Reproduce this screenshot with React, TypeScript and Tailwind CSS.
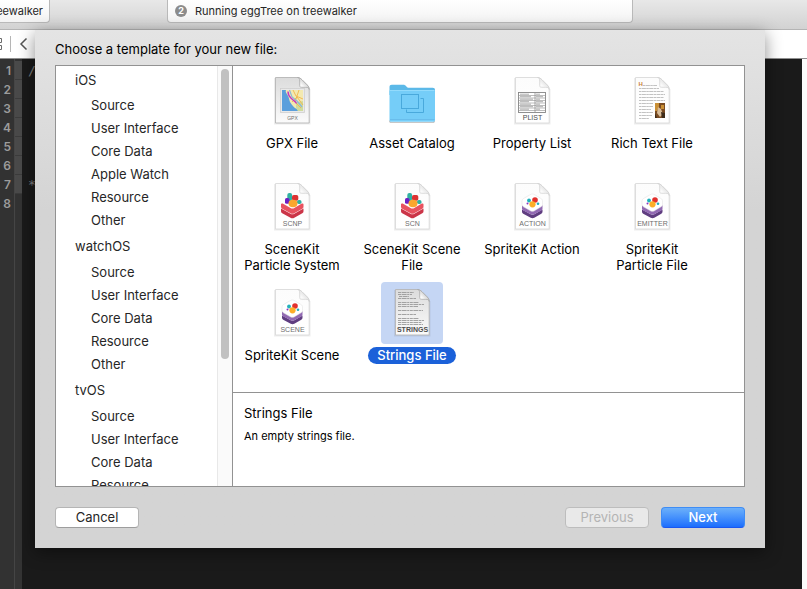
import { useId, useState } from "react";
import type { ReactNode } from "react";

type Template = { name: string; lines: string[]; icon: ReactNode; info?: string };

const sections = [
  { title: "iOS", items: ["Source", "User Interface", "Core Data", "Apple Watch", "Resource", "Other"] },
  { title: "watchOS", items: ["Source", "User Interface", "Core Data", "Resource", "Other"] },
  { title: "tvOS", items: ["Source", "User Interface", "Core Data", "Resource"] },
];

function Page({ label, bold, dark, children }: { label?: string; bold?: boolean; dark?: boolean; children?: ReactNode }) {
  const id = useId();
  return (
    <svg viewBox="0 0 62 62" className="size-full" aria-hidden="true">
      <defs>
        <linearGradient id={id + "p"} x1="0" y1="0" x2="0" y2="1">
          <stop offset="0" stopColor={dark ? "#dcdcdc" : "#fcfcfc"} />
          <stop offset="1" stopColor={dark ? "#fbfbfb" : "#ffffff"} />
        </linearGradient>
        <linearGradient id={id + "f"} x1="0" y1="1" x2="0.7" y2="0.3">
          <stop offset="0" stopColor="#ffffff" />
          <stop offset="0.5" stopColor="#fafafa" />
          <stop offset="1" stopColor={dark ? "#c9c9c9" : "#dedede"} />
        </linearGradient>
      </defs>
      <path d="M14 8v45.500h34.500V19" fill="none" stroke="#000" strokeOpacity="0.07" strokeWidth="2" />
      <path d="M14.500 7.500H36.500c1.500 0 3 .8 4.500 2.300l5 5c1.500 1.500 2.200 3 2.200 4.700v33.500H14.500z" fill={`url(#${id}p)`} stroke={dark ? "#b5b5b5" : "#dadada"} strokeWidth="0.9" />
      {children}
      <path
        d="M36.500 7.500c1.600 0 2.200 1.500 2.200 3.500v4.500c0 1.300.5 1.800 1.800 1.800h4.200c2 0 3.500.5 3.500 2.200 0-1.700-.7-3.200-2.200-4.700l-5-5c-1.500-1.500-3-2.300-4.500-2.300z"
        fill={`url(#${id}f)`}
        stroke={dark ? "#a3a3a3" : "#cfcfcf"}
        strokeWidth="0.7"
      />
      {label && (
        <text
          x="31.500"
          y="50"
          textAnchor="middle"
          fontFamily="'Liberation Sans', Arial, sans-serif"
          fontSize={label === "GPX" ? 5 : 7}
          fontWeight={bold && label !== "PLIST" ? 700 : 400}
          fill={bold ? "#4d4d4d" : "#6e6e6e"}
        >
          {label}
        </text>
      )}
    </svg>
  );
}

function Gpx() {
  return (
    <Page label="GPX" dark>
      <rect x="19.500" y="18.500" width="24" height="24" fill="#e9e9e9" stroke="#cfcfcf" strokeWidth="0.8" />
      <rect x="21" y="20" width="21" height="21" fill="#5b9fdc" />
      <path d="M25 20h17v18c-2 1-4 1-6 1-3-1-5-4-7-7-1-3-1-5-2.500-7-1-2-2.500-3-1.500-5z" fill="#f3e9b0" />
      <path d="M36 32l6-1v10h-5c-2-2-3-5-1-9z" fill="#cfdb9b" />
      <path d="M32 20l3 6 7 3M31 32l5-5 6 8M38 20l-4 12 6 6" stroke="#f2b64b" strokeWidth="0.9" fill="none" />
      <path d="M28.500 20l2.500 7 5 4 5 6" stroke="#8db7d8" strokeWidth="1.200" fill="none" />
      <path d="M27 21.500c0 5 2.500 6 4.500 8s3 2 4 4" stroke="#c437c0" strokeWidth="1.400" fill="none" />
    </Page>
  );
}

function Folder() {
  return (
    <svg viewBox="0 0 62 62" className="size-full" aria-hidden="true">
      <path d="M8.500 50.500c0 1.500 1 2 2 2h41c1 0 2-.5 2-2" fill="none" stroke="#000" strokeOpacity="0.22" strokeWidth="1.200" />
      <path d="M8.500 17c0-1.500.8-2.300 2.300-2.300h11.400c1.500 0 2 .5 3 1.500s1.500 1.500 3 1.500h23.500c1.500 0 2.300.8 2.300 2.300v5H8.500z" fill="#5cb9e8" />
      <path d="M8.500 21.500c0-1 .5-1.500 1.500-1.500h42.500c1 0 1.500.5 1.500 1.500V50c0 1-.5 1.800-1.800 1.800H10.300c-1.300 0-1.800-.8-1.800-1.800z" fill="#75cdf8" />
      <path d="M9 20.500h44.500" stroke="#93dbfc" />
      <path d="M9 49.500h44.500" stroke="#69bdec" />
      <g fill="none" stroke="#49a9dc">
        <rect x="20.500" y="24.500" width="17" height="14" />
        <path d="M39.500 28.500h3v14h-17v-3" />
      </g>
    </svg>
  );
}

function Plist() {
  return (
    <Page label="PLIST" bold>
      <rect x="17.500" y="22.500" width="27" height="20" fill="#fff" stroke="#858585" strokeWidth="0.9" />
      {[24.500, 27, 29.500, 32, 34.500, 37, 39.500].map((y, i) => (
        <g key={y}>
          <path d={`M18 ${y + 1}h26`} stroke="#a0a0a0" strokeWidth="0.7" />
          <path d={`M19 ${y - 0.3}h${9 + (i % 3) * 2}M35 ${y - 0.3}h${4 + (i % 2) * 3}`} stroke="#9a9a9a" strokeWidth="0.8" />
        </g>
      ))}
      <path d="M34 23v19" stroke="#909090" strokeWidth="0.8" />
    </Page>
  );
}

function RichText() {
  return (
    <Page>
      <text x="17.500" y="15.500" fontSize="6" fontWeight="700" fontFamily="'Liberation Sans', Arial, sans-serif" fill="#c9803a">H</text>
      <g stroke="#c2c2c2" strokeWidth="1" strokeDasharray="2.500 0.400 4 0.400">
        <path d="M22 15.500h14M18 18.500h20M18 21.500h25M18 24.500h26M18 27.500h25M18 30.500h26M18 33.500h14M18 36.500h14M18 39.500h12M18 42.500h14M18 45.500h13M18 48.500h10" />
      </g>
      <rect x="34" y="33" width="10" height="15" fill="#7a4b22" />
      <path d="M34 33h4v4l-2 4h-2zM40 35h3v4h-3z" fill="#c98f35" />
      <path d="M37 37l3 2 2 5-3 3-3-4z" fill="#d8bc98" />
      <path d="M40 42l4 1v5h-3zM34 43l2 5h-2z" fill="#3e2c1b" />
    </Page>
  );
}

function SceneKit({ label }: { label: string }) {
  return (
    <Page label={label}>
      <path d="M20 32.500l9.500 5.300c1.200.7 2.600.7 3.800 0L42.500 32.500v2.700c0 .9-.4 1.500-1.200 2l-8 4.500c-1.200.7-2.600.7-3.800 0l-8.300-4.500c-.8-.5-1.200-1.100-1.200-2z" fill="#cb3548" />
      <path d="M20 28.300c0-.8.8-1.200 1.700-.7l7.800 4.400c1.200.7 2.600.7 3.800 0l7.500-4.400c.9-.5 1.700-.1 1.700.7v2.500c0 .9-.4 1.500-1.200 2l-8 4.500c-1.200.7-2.600.7-3.800 0l-8.300-4.500c-.8-.5-1.200-1.100-1.200-2z" fill="#e8525f" />
      <rect x="26.300" y="17" width="4.800" height="8" rx="2" fill="#2fb0a2" />
      <rect x="36" y="24" width="4.500" height="4" rx="1.800" fill="#2fb0a2" />
      <rect x="31" y="19" width="6.300" height="5.800" rx="1.800" fill="#dc3232" />
      <rect x="24" y="22" width="4.500" height="5.800" rx="1.600" fill="#6f1fc2" />
      <ellipse cx="32" cy="27.500" rx="4.500" ry="3.700" fill="#fba72d" />
    </Page>
  );
}

function SpriteKit({ label }: { label: string }) {
  return (
    <Page label={label}>
      <path d="M21 33.500l8.700 4.800c1.200.6 2.400.6 3.600 0L41.500 33.500v2.300c0 .9-.4 1.400-1.200 1.900l-7 4c-1.200.6-2.400.6-3.600 0l-7.500-4c-.8-.5-1.200-1-1.200-1.900z" fill="#5f3d80" />
      <path d="M21 29l8.700 5.500c1.200.6 2.400.6 3.600 0L41.500 29v3.500c0 .9-.4 1.400-1.200 1.900l-7 3.900c-1.200.6-2.400.6-3.600 0l-7.500-3.900c-.8-.5-1.200-1-1.200-1.900z" fill="#9169b2" />
      <path d="M29.500 18.500c1.200-.7 2.600-.7 3.800 0l6.700 4c1 .6 1.500 1.500 1.500 2.500v3.500c0 1-.5 1.700-1.500 2.300l-6.700 4c-1.200.7-2.600.7-3.800 0l-7-4c-1-.6-1.500-1.300-1.500-2.300V25c0-1 .5-1.900 1.500-2.500z" fill="#fff" stroke="#e4e4e4" strokeWidth="0.6" />
      <circle cx="28" cy="24.500" r="1.900" fill="#21b1bb" />
      <circle cx="34" cy="24" r="2.800" fill="#e2302d" />
      <circle cx="31.500" cy="28.300" r="3.100" fill="#fcae28" />
      <circle cx="37" cy="27.700" r="1.300" fill="#25aebb" />
      <circle cx="26.500" cy="27.500" r="1" fill="#8a35c0" />
    </Page>
  );
}

function Strings() {
  return (
    <Page label="STRINGS" bold dark>
      <g stroke="#9a9a9a" strokeWidth="0.9" strokeDasharray="3 0.600 5 0.600 2 0.600">
        <path d="M17 10.500h16M17 12.500h14M18 14.500h10M17 16.500h18M17 20.500h21M17 22.500h26M17 24.500h20M17 28.500h25M17 32.500h18M17 36.500h21M17 38.500h26M17 40.500h24M17 42.500h25" />
      </g>
    </Page>
  );
}

const templates: Template[] = [
  { name: "GPX File", lines: ["GPX File"], icon: <Gpx /> },
  { name: "Asset Catalog", lines: ["Asset Catalog"], icon: <Folder /> },
  { name: "Property List", lines: ["Property List"], icon: <Plist /> },
  { name: "Rich Text File", lines: ["Rich Text File"], icon: <RichText /> },
  { name: "SceneKit Particle System", lines: ["SceneKit", "Particle System"], icon: <SceneKit label="SCNP" /> },
  { name: "SceneKit Scene File", lines: ["SceneKit Scene", "File"], icon: <SceneKit label="SCN" /> },
  { name: "SpriteKit Action", lines: ["SpriteKit Action"], icon: <SpriteKit label="ACTION" /> },
  { name: "SpriteKit Particle File", lines: ["SpriteKit", "Particle File"], icon: <SpriteKit label="EMITTER" /> },
  { name: "SpriteKit Scene", lines: ["SpriteKit Scene"], icon: <SpriteKit label="SCENE" /> },
  { name: "Strings File", lines: ["Strings File"], icon: <Strings />, info: "An empty strings file." },
];

function Toolbar() {
  return (
    <header className="flex h-[30px] items-start border-b border-[#b4b4b4] bg-linear-to-b from-[#e8e8e8] to-[#d2d2d2] text-[11px] text-[#262626]">
      <button className="flex h-[23px] w-[50px] shrink-0 items-center justify-end overflow-hidden rounded-br border-r border-b border-[#b9b9b9] bg-linear-to-b from-white to-[#f3f3f3] pr-1.5 whitespace-nowrap">
        treewalker
      </button>
      <div className="mr-[174px] ml-[117px] flex h-[23px] grow items-center gap-2 rounded-b border border-t-0 border-[#b9b9b9] bg-linear-to-b from-white to-[#f3f3f3] pl-[7px]">
        <span className="flex size-3 items-center justify-center rounded-full bg-[#8c8c8c] text-[9px] font-bold text-white">2</span>
        <span>Running eggTree on treewalker</span>
      </div>
    </header>
  );
}

function Editor() {
  return (
    <>
      <nav className="flex h-[29px] items-center border-b border-[#8f8f8f] bg-white">
        <svg viewBox="0 0 3 14" className="h-3.5 w-[3px]" fill="none" stroke="#6b6b6b" aria-hidden="true">
          <path d="M0 1.500h1.500v4H0M0 8.500h1.500v4H0" />
        </svg>
        <span className="ml-[7px] h-4 w-px bg-[#b5b5b5]" />
        <button aria-label="Back" className="ml-2">
          <svg viewBox="0 0 9 14" className="h-3.5 w-[9px]" fill="none" stroke="#555" strokeWidth="1.500" aria-hidden="true">
            <path d="M7.500 1.500L2 7l5.500 5.500" />
          </svg>
        </button>
      </nav>
      <main className="flex grow bg-[#1a1a1a]">
        <ol className="w-[15px] shrink-0 border-r border-[#454545] bg-[#323232] pt-0.5 pr-[3px] text-right text-[12px] leading-[19px] font-semibold text-[#9c9c9c]">
          {[1, 2, 3, 4, 5, 6, 7, 8].map((n) => (
            <li key={n}>{n}</li>
          ))}
        </ol>
        <div className="w-[7px] shrink-0 bg-[#333] pt-0.5">
          {[1, 2, 3, 4, 5, 6, 7].map((n) => (
            <div key={n} className="h-[19px] border-b border-[#3c3c3c] bg-[#4a4a4a]" />
          ))}
        </div>
        <pre className="grow pt-0.5 pl-1.5 font-['DejaVu_Sans_Mono',monospace] text-[13px] leading-[19px] text-[#7d7d7d]">
          {"/\n\n\n\n\n\n*"}
        </pre>
        <div className="w-[5px] shrink-0 bg-[#fafafa]" />
      </main>
    </>
  );
}

export default function App() {
  const [selected, setSelected] = useState("Strings File");
  const current = templates.find((t) => t.name === selected);
  return (
    <div className="relative flex h-screen flex-col overflow-hidden font-['Inter','Liberation_Sans',sans-serif] text-[13px] text-black">
      <Toolbar />
      <Editor />
      <section
        role="dialog"
        aria-labelledby="sheet-title"
        className="absolute top-[30px] right-[42px] left-[35px] bg-linear-to-b from-[#e4e4e4] to-[#d4d4d4] to-35% px-5 pb-5 shadow-[0_4px_16px_rgba(0,0,0,0.45)]"
      >
        <h1 id="sheet-title" className="pt-[9px] pb-1.5 leading-5">Choose a template for your new file:</h1>
        <div className="flex h-[422px] border border-[#929292] bg-white">
          <div className="flex w-[177px] shrink-0 overflow-hidden border-r border-[#929292]">
            <nav className="grow text-[#262626]">
              {sections.map((s, i) => (
                <div key={s.title}>
                  <h2 className={i === 0 ? "pl-[19px] leading-7" : "pl-[19px] leading-[29px]"}>{s.title}</h2>
                  <ul>
                    {s.items.map((item) => (
                      <li key={item}>
                        <button className="block pl-[35px] leading-[23px]">{item}</button>
                      </li>
                    ))}
                  </ul>
                </div>
              ))}
            </nav>
            <div className="w-[15px] shrink-0 border-l border-[#e8e8e8] bg-[#fafafa] px-[3px] pt-[3px]">
              <div className="h-[290px] w-2 rounded-full bg-[#c1c1c1]" />
            </div>
          </div>
          <div className="flex min-w-0 grow flex-col">
            <ul className="-ml-px grid grow auto-rows-[106px] grid-cols-[repeat(auto-fill,120px)] content-start pt-1">
              {templates.map((t) => {
                const on = t.name === selected;
                return (
                  <li key={t.name}>
                    <button
                      onClick={() => setSelected(t.name)}
                      aria-pressed={on}
                      className="flex w-full flex-col items-center gap-[3px] leading-4"
                    >
                      <span className={on ? "size-[62px] rounded bg-[#c5d6f4]" : "size-[62px]"}>{t.icon}</span>
                      <span className={on ? "rounded-full bg-[#1b61d9] px-[9px] pb-px font-medium text-white" : ""}>
                        {t.lines.map((l) => (
                          <span key={l} className="block whitespace-nowrap">{l}</span>
                        ))}
                      </span>
                    </button>
                  </li>
                );
              })}
            </ul>
            <div className="h-[94px] shrink-0 border-t border-[#929292] px-[11px] pt-3">
              <h2 className="leading-4">{selected}</h2>
              <p className="pt-2 text-[11px] leading-[15px]">{current?.info}</p>
            </div>
          </div>
        </div>
        <footer className="flex gap-3 pt-5 leading-[19px]">
          <button className="mr-auto w-[84px] rounded border border-[#b5b5b5] border-b-[#9d9d9d] bg-white text-[#262626]">Cancel</button>
          <button disabled className="w-[84px] rounded border border-[#bdbdbd] bg-[#e9e9e9] text-[#b4b4b4]">Previous</button>
          <button className="w-[84px] rounded border border-[#3f8df5] border-b-[#1a57f0] bg-linear-to-b from-[#6cb0fa] to-[#1b6dfd] font-medium text-white">Next</button>
        </footer>
      </section>
    </div>
  );
}
